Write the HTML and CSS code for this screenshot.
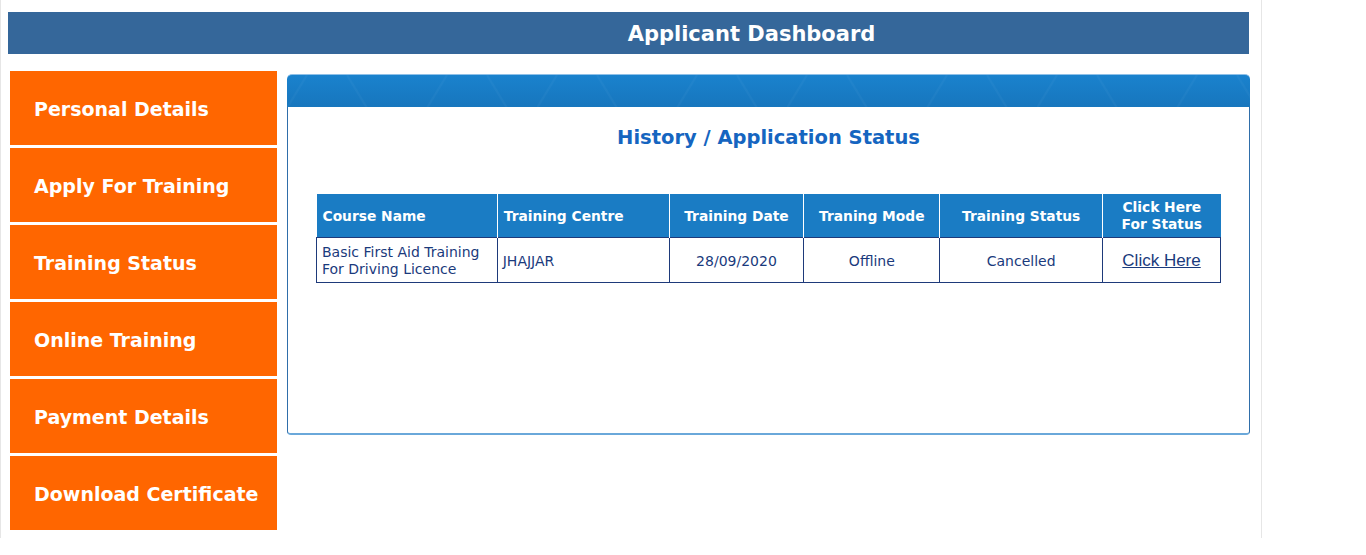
FILE: index.html
```html
<!DOCTYPE html>
<html lang="en">
<head>
  <meta charset="UTF-8" />
  <title>Applicant Dashboard</title>
  <link rel="stylesheet" href="styles.css">
</head>
<body>
  <div class="page">
    <div class="header">Applicant Dashboard</div>

    <div class="main">
      <div class="sidebar">
        <a class="side-link" href="#">Personal Details</a>
        <a class="side-link" href="#">Apply For Training</a>
        <a class="side-link" href="#">Training Status</a>
        <a class="side-link" href="#">Online Training</a>
        <a class="side-link" href="#">Payment Details</a>
        <a class="side-link" href="#">Download Certificate</a>
      </div>

      <div class="panel">
        <div class="panel-top"></div>
        <div class="panel-body">
          <h2 class="panel-title">History / Application Status</h2>

          <table class="status-table">
            <tr>
              <th class="col-course left">Course Name</th>
              <th class="col-centre left">Training Centre</th>
              <th class="col-date">Training Date</th>
              <th class="col-mode">Traning Mode</th>
              <th class="col-status">Training Status</th>
              <th class="col-link">Click Here<br>For Status</th>
            </tr>
            <tr>
              <td class="left">Basic First Aid Training For Driving Licence</td>
              <td class="left">JHAJJAR</td>
              <td>28/09/2020</td>
              <td>Offline</td>
              <td>Cancelled</td>
              <td><a class="status-link" href="#">Click Here</a></td>
            </tr>
          </table>
        </div>
      </div>
    </div>
  </div>
</body>
</html>
```

FILE: styles.css
```css
* {
  box-sizing: border-box;
}

body {
  margin: 0;
  background: #fff;
  font-family: 'DejaVu Sans', Verdana, sans-serif;
}

.page {
  width: 1262px;
  min-height: 538px;
  padding: 12px 12px 0 7px;
  border-left: 1px solid #e6e6e6;
  border-right: 1px solid #e6e6e6;
}

.header {
  height: 42px;
  line-height: 44px;
  background: #35679a;
  color: #fff;
  font-weight: bold;
  font-size: 21px;
  text-align: center;
  padding-left: 246px;
}

.main {
  display: flex;
  align-items: flex-start;
  margin-top: 17px;
  padding-left: 2px;
}

/* Left menu */
.sidebar {
  flex-shrink: 0;
  width: 267px;
  display: flex;
  flex-direction: column;
  gap: 3px;
}

.side-link {
  display: flex;
  align-items: center;
  height: 74px;
  padding: 2px 0 0 24px;
  background: #ff6600;
  color: #fff;
  font-weight: bold;
  font-size: 19px;
  text-decoration: none;
}

/* Status panel */
.panel {
  flex-shrink: 0;
  width: 963px;
  margin-left: 10px;
  margin-top: 3px;
}

.panel-top {
  height: 33px;
  border-radius: 5px 5px 0 0;
  background:
    url("data:image/svg+xml,%3Csvg xmlns='http://www.w3.org/2000/svg' width='250' height='33'%3E%3Cpath d='M0 33 L20 0 M60 0 L80 33 L140 33 L160 0 M200 0 L220 33' stroke='%23ffffff' stroke-opacity='0.03' fill='none' stroke-width='2'/%3E%3C/svg%3E") repeat-x,
    linear-gradient(#1a82cd, #1776bd);
  border-top: 1px solid #8ec0e8;
}

.panel-body {
  height: 328px;
  border: 1px solid #2f6eaa;
  border-top: none;
  border-bottom: 2px solid #6aa8da;
  border-radius: 0 0 4px 4px;
  padding: 19px 28px 0;
}

.panel-title {
  margin: 0 0 45px;
  text-align: center;
  color: #1565c0;
  font-size: 19.5px;
  font-weight: bold;
}

.status-table {
  width: 905px;
  border-collapse: collapse;
  font-size: 14px;
  color: #1a3a7c;
}

.status-table th {
  height: 43px;
  background: #1a7cc4;
  color: #fff;
  font-weight: bold;
  font-size: 13.8px;
  line-height: 17px;
  padding: 2px 6px 0;
  border-right: 1px solid #fff;
  text-align: center;
}

.status-table th:last-child {
  border-right: none;
}

.status-table td {
  height: 45px;
  padding: 3px 5px 0;
  border: 1px solid #1e3a7a;
  text-align: center;
  line-height: 17px;
}

.status-table .left {
  text-align: left;
}

.col-course { width: 181px; }
.col-centre { width: 172px; }
.col-date { width: 135px; }
.col-mode { width: 136px; }
.col-status { width: 163px; }
.col-link { width: 118px; }

.status-link {
  font-family: 'Liberation Sans', Arial, sans-serif;
  font-size: 17px;
  color: #1a3a7c;
}
```
